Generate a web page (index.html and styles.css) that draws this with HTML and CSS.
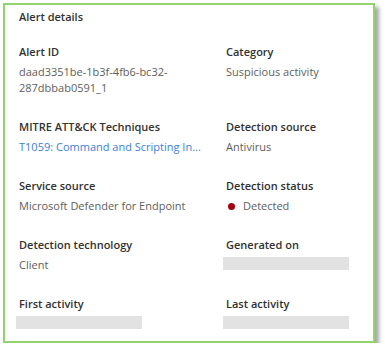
FILE: index.html
```html
<!DOCTYPE html>
<html lang="en">
<head>
  <meta charset="UTF-8" />
  <title>Alert details</title>
  <link rel="stylesheet" href="styles.css">
</head>
<body>

  <div class="card">
    <h3 class="title">Alert details</h3>

    <div class="grid">
      <div class="field">
        <div class="label">Alert ID</div>
        <div class="value">daad3351be-1b3f-4fb6-bc32-<br>287dbbab0591_1</div>
      </div>
      <div class="field">
        <div class="label">Category</div>
        <div class="value">Suspicious activity</div>
      </div>

      <div class="field">
        <div class="label">MITRE ATT&amp;CK Techniques</div>
        <div class="value"><a class="link" href="#" title="T1059: Command and Scripting Interpreter">T1059: Command and Scripting In...</a></div>
      </div>
      <div class="field">
        <div class="label">Detection source</div>
        <div class="value">Antivirus</div>
      </div>

      <div class="field">
        <div class="label">Service source</div>
        <div class="value">Microsoft Defender for Endpoint</div>
      </div>
      <div class="field">
        <div class="label">Detection status</div>
        <div class="value"><span class="dot"></span>Detected</div>
      </div>

      <div class="field">
        <div class="label">Detection technology</div>
        <div class="value">Client</div>
      </div>
      <div class="field">
        <div class="label">Generated on</div>
        <div class="value"><div class="redacted"></div></div>
      </div>

      <div class="field">
        <div class="label">First activity</div>
        <div class="value"><div class="redacted"></div></div>
      </div>
      <div class="field">
        <div class="label">Last activity</div>
        <div class="value"><div class="redacted"></div></div>
      </div>
    </div>
  </div>

</body>
</html>
```

FILE: styles.css
```css
body {
  margin: 0;
  background: #fff;
  font-family: "Segoe UI", "Open Sans", sans-serif;
  font-size: 11px;
  color: #323130;
}

.card {
  margin: 3px 0 0 3px;
  width: 354px;
  border: 2px solid #92d36e;
  padding: 2px 0 12px 14px;
  box-shadow: 4px 4px 4px rgba(0, 0, 0, 0.35);
  background: #fff;
}

.title {
  margin: 0 0 15px;
  font-size: 11px;
  font-weight: 600;
  line-height: 20px;
}

.grid {
  display: grid;
  grid-template-columns: 207px 1fr;
  row-gap: 21px;
}

.label {
  font-weight: 600;
  line-height: 20px;
  margin-bottom: 2px;
  white-space: nowrap;
}

.value {
  color: #605e5c;
  line-height: 16px;
  white-space: nowrap;
}

.link {
  color: #3d7fd6;
  text-decoration: none;
}

.dot {
  display: inline-block;
  width: 7px;
  height: 7px;
  border-radius: 50%;
  background: #a4000f;
  margin: 0 8px 1px 2px;
  vertical-align: middle;
}

.redacted {
  width: 126px;
  height: 13px;
  margin-left: -3px;
  background: #e2e2e2;
}
```
